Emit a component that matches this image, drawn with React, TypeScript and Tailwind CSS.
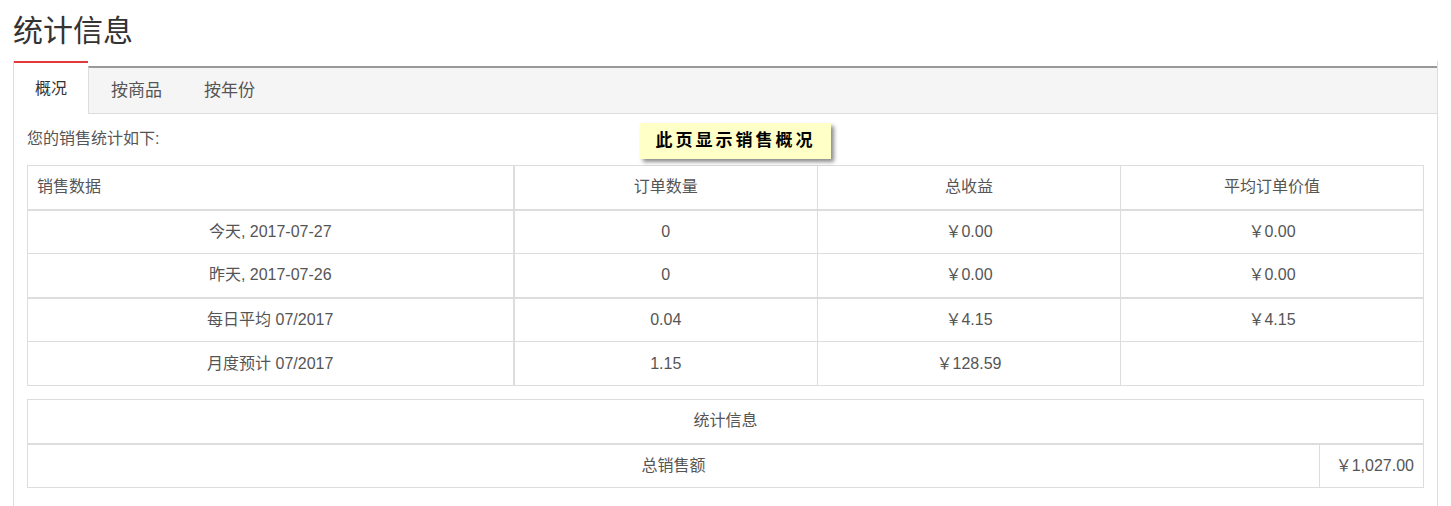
const font = { fontFamily: '"Liberation Sans", "Noto Sans CJK SC", sans-serif' };

const rows = [
  ['今天, 2017-07-27', '0', '￥0.00', '￥0.00'],
  ['昨天, 2017-07-26', '0', '￥0.00', '￥0.00'],
  ['每日平均 07/2017', '0.04', '￥4.15', '￥4.15'],
  ['月度预计 07/2017', '1.15', '￥128.59', ''],
];

export default function App() {
  return (
    <div className="h-[506px] w-[1451px] overflow-hidden bg-white text-[#555]" style={font}>
      <h1 className="pl-[13px] pt-[9px] text-[30px] leading-[44px] text-[#333]">统计信息</h1>
      <div className="relative ml-[13px] mr-[13px] mt-[8px] border-l border-r border-[#ddd] pb-6">
        <div className="flex h-[53px] items-end">
          <div className="flex h-[53px] w-[74px] items-center justify-center border-t-2 border-[#e4393c] bg-white text-[16px] text-[#333]">
            概况
          </div>
          <div className="flex h-[48px] flex-1 items-center gap-[42px] border-b border-t-2 border-l border-[#ddd] border-t-[#999] bg-[#f5f5f5] pl-[22px] text-[17px]">
            <span>按商品</span>
            <span>按年份</span>
          </div>
        </div>
        <div className="px-[13px]">
          <div className="pt-[15px] text-[16px] leading-[20px]">您的销售统计如下:</div>
          <table className="mt-[16px] w-[1397px] border-collapse border border-[#ddd] text-[16px]">
            <thead>
              <tr className="h-[44px] border-b-2 border-[#ddd]">
                <th className="w-[486px] border-r-2 border-[#ddd] pl-[9px] text-left font-normal">销售数据</th>
                <th className="w-[304px] border-r border-[#ddd] font-normal">订单数量</th>
                <th className="w-[303px] border-r border-[#ddd] font-normal">总收益</th>
                <th className="font-normal">平均订单价值</th>
              </tr>
            </thead>
            <tbody>
              {rows.map((r, i) => (
                <tr key={i} className={`h-[44px] border-[#ddd] ${i === 1 ? 'border-b-2' : 'border-b'}`}>
                  <td className="border-r-2 border-[#ddd] text-center">{r[0]}</td>
                  <td className="border-r border-[#ddd] text-center">{r[1]}</td>
                  <td className="border-r border-[#ddd] text-center">{r[2]}</td>
                  <td className="text-center">{r[3]}</td>
                </tr>
              ))}
            </tbody>
          </table>
          <table className="mt-[13px] w-[1397px] border-collapse border border-[#ddd] text-[16px]">
            <thead>
              <tr className="h-[44px] border-b-2 border-[#ddd]">
                <th colSpan={2} className="font-normal">统计信息</th>
              </tr>
            </thead>
            <tbody>
              <tr className="h-[44px]">
                <td className="border-r border-[#ddd] text-center">总销售额</td>
                <td className="w-[104px] pr-[9px] text-right">￥1,027.00</td>
              </tr>
            </tbody>
          </table>
        </div>
        <div className="absolute left-[626px] top-[62px] flex h-[36px] w-[191px] items-center justify-center bg-[#ffffc8] text-[17px] font-semibold tracking-[3px] text-black shadow-[3px_3px_4px_rgba(0,0,0,0.45)]">
          此页显示销售概况
        </div>
      </div>
    </div>
  );
}
